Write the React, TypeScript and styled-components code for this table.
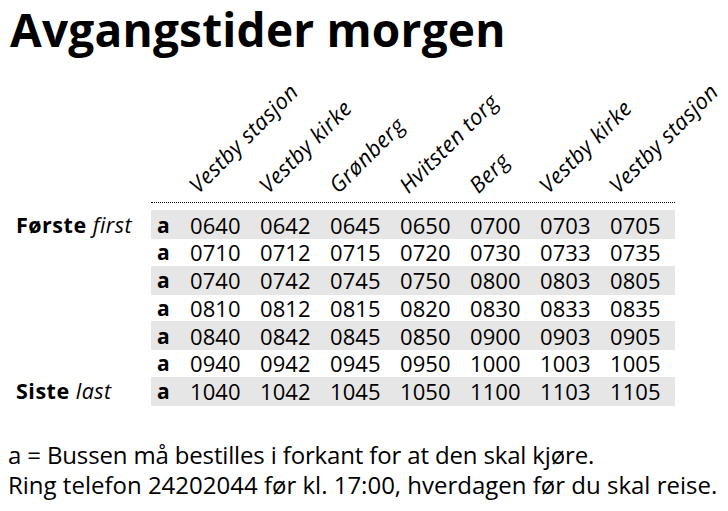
import React from "react";
import styled, { createGlobalStyle } from "styled-components";

const Global = createGlobalStyle`
  html, body { margin: 0; padding: 0; background: #fff; }
  body { font-family: "Open Sans", "DejaVu Sans", sans-serif; color: #000; }
`;

const Page = styled.div`
  width: 728px;
  height: 511px;
  overflow: hidden;
  display: flex;
  flex-direction: column;
`;

const Title = styled.h1`
  margin: 0 0 0 10px;
  font-size: 46px;
  line-height: 58px;
  font-weight: 700;
  letter-spacing: 0.2px;
  white-space: nowrap;
`;

const Timetable = styled.div`
  display: flex;
  flex-direction: column;
`;

const HeaderRow = styled.div`
  display: flex;
  height: 145px;
  margin-left: 151px;
  width: 524px;
  border-bottom: 1px dotted #000;
  box-sizing: border-box;
  margin-bottom: 7px;
`;

const HeaderSpacer = styled.div`
  width: 34px;
  flex: none;
`;

const HeaderCell = styled.div`
  width: 70px;
  flex: none;
  display: flex;
  align-items: flex-end;
  padding-bottom: 6px;
  padding-left: 15px;
  box-sizing: border-box;
`;

const HeaderLabel = styled.span`
  display: block;
  white-space: nowrap;
  font-style: italic;
  font-size: 22px;
  line-height: 22px;
  letter-spacing: 0.4px;
  transform-origin: left bottom;
  transform: rotate(-45deg);
`;

const Row = styled.div<{ $shaded: boolean }>`
  display: flex;
  height: ${(p) => (p.$shaded ? "29px" : "26.5px")};
  align-items: stretch;
`;

const RowLabel = styled.div`
  width: 151px;
  flex: none;
  box-sizing: border-box;
  padding-left: 16px;
  display: flex;
  align-items: center;
  font-size: 21.5px;
  line-height: 24px;
  letter-spacing: 0.5px;
  white-space: nowrap;
`;

const Bold = styled.b`
  font-weight: 700;
`;

const Em = styled.i`
  font-style: italic;
`;

const RowBody = styled.div<{ $shaded: boolean }>`
  display: grid;
  grid-template-columns: 34px repeat(7, 70px);
  width: 524px;
  background: ${(p) => (p.$shaded ? "#e6e6e6" : "transparent")};
  align-items: center;
  line-height: 24px;
`;

const Mark = styled.span`
  font-weight: 700;
  font-size: 21px;
  padding-left: 6px;
`;

const Time = styled.span`
  font-size: 22px;
  padding-left: 5px;
  letter-spacing: 0.1px;
`;

const Footer = styled.div`
  margin: 34px 0 0 8px;
  font-size: 24px;
  line-height: 30px;
  white-space: nowrap;
`;

const FooterLine = styled.div<{ $tight?: boolean }>`
  letter-spacing: ${(p) => (p.$tight ? "-0.15px" : "0")};
`;

const stops = [
  "Vestby stasjon",
  "Vestby kirke",
  "Grønberg",
  "Hvitsten torg",
  "Berg",
  "Vestby kirke",
  "Vestby stasjon",
];

const trips: { label?: [string, string]; times: string[] }[] = [
  { label: ["Første", "first"], times: ["0640", "0642", "0645", "0650", "0700", "0703", "0705"] },
  { times: ["0710", "0712", "0715", "0720", "0730", "0733", "0735"] },
  { times: ["0740", "0742", "0745", "0750", "0800", "0803", "0805"] },
  { times: ["0810", "0812", "0815", "0820", "0830", "0833", "0835"] },
  { times: ["0840", "0842", "0845", "0850", "0900", "0903", "0905"] },
  { times: ["0940", "0942", "0945", "0950", "1000", "1003", "1005"] },
  { label: ["Siste", "last"], times: ["1040", "1042", "1045", "1050", "1100", "1103", "1105"] },
];

export default function App() {
  return (
    <Page>
      <Global />
      <Title>Avgangstider morgen</Title>
      <Timetable>
        <HeaderRow>
          <HeaderSpacer />
          {stops.map((s, i) => (
            <HeaderCell key={i}>
              <HeaderLabel>{s}</HeaderLabel>
            </HeaderCell>
          ))}
        </HeaderRow>
        {trips.map((t, i) => {
          const shaded = i % 2 === 0;
          return (
            <Row key={i} $shaded={shaded}>
              <RowLabel>
                {t.label && (
                  <>
                    <Bold>{t.label[0]}</Bold>&nbsp;<Em>{t.label[1]}</Em>
                  </>
                )}
              </RowLabel>
              <RowBody $shaded={shaded}>
                <Mark>a</Mark>
                {t.times.map((tm, j) => (
                  <Time key={j}>{tm}</Time>
                ))}
              </RowBody>
            </Row>
          );
        })}
      </Timetable>
      <Footer>
        <FooterLine $tight>a = Bussen må bestilles i forkant for at den skal kjøre.</FooterLine>
        <FooterLine>Ring telefon 24202044 før kl. 17:00, hverdagen før du skal reise.</FooterLine>
      </Footer>
    </Page>
  );
}
